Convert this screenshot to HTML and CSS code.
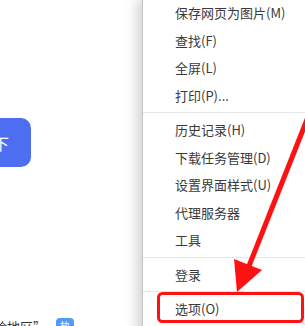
FILE: index.html
```html
<!DOCTYPE html>
<html lang="zh-CN">
<head>
    <meta charset="UTF-8">
    <title>菜单 - 选项</title>
    <link rel="stylesheet" href="styles.css">
</head>
<body>
    <!-- 后面的网页内容（被菜单挡住一部分） -->
    <div class="page">
        <div class="search-row">
            <button class="search-btn">百度一下</button>
        </div>
        <div class="hot-line">
            <span class="hot-text">风险地区”</span>
            <span class="hot-badge">热</span>
        </div>
    </div>

    <!-- 浏览器右上角展开的下拉菜单 -->
    <div class="menu">
        <div class="menu-item">保存网页为图片(M)</div>
        <div class="menu-item">查找(F)</div>
        <div class="menu-item">全屏(L)</div>
        <div class="menu-item">打印(P)...</div>
        <div class="menu-sep"></div>
        <div class="menu-item">历史记录(H)</div>
        <div class="menu-item">下载任务管理(D)</div>
        <div class="menu-item">设置界面样式(U)</div>
        <div class="menu-item">代理服务器</div>
        <div class="menu-item">工具</div>
        <div class="menu-sep"></div>
        <div class="menu-item">登录</div>
        <div class="menu-sep"></div>
        <div class="menu-item">选项(O)</div>
    </div>
    <div class="edge-tab"></div>

    <!-- 红色标注：箭头 + 框 -->
    <svg class="mark" width="305" height="326" viewBox="0 0 305 326">
        <line x1="310" y1="112" x2="249" y2="266" stroke="#ff1111" stroke-width="5"/>
        <polygon points="237,292 234,259 262,270" fill="#ff1111"/>
        <rect x="158.5" y="293.5" width="144" height="28" rx="4" fill="none" stroke="#ff1111" stroke-width="3"/>
    </svg>
</body>
</html>
```

FILE: styles.css
```css
body {
    margin: 0;
    width: 305px;
    height: 326px;
    position: relative;
    overflow: hidden;
    background-color: #fff;
    font-family: "Noto Sans CJK SC", "Microsoft YaHei", sans-serif;
}

/* 背后的网页 */
.page {
    padding-top: 118px;
}

.search-row {
    display: flex;
}

.search-btn {
    width: 100px;
    height: 49px;
    margin-left: -69px;
    padding: 0 22px 0 0;
    border: none;
    border-radius: 10px;
    background-color: #4e6ef2;
    color: #fff;
    font-family: inherit;
    font-size: 16px;
    text-align: right;
}

.hot-line {
    display: flex;
    align-items: center;
    margin-top: 151px;
    height: 16px;
}

.hot-text {
    margin-left: -19px;
    font-size: 13px;
    color: #333;
}

.hot-badge {
    margin-left: 10px;
    width: 18px;
    height: 16px;
    border-radius: 4px;
    background-color: #4e9cf6;
    color: #fff;
    font-size: 11px;
    line-height: 16px;
    text-align: center;
}

/* 下拉菜单 */
.menu {
    position: absolute;
    left: 142px;
    top: -1px;
    width: 170px;
    height: 340px;
    background-color: #fff;
    border-left: 1px solid #c4c4c4;
    box-shadow: -5px 0 12px rgba(0, 0, 0, 0.18);
}

.menu-item {
    height: 27.5px;
    line-height: 27.5px;
    padding-left: 32px;
    font-size: 13px;
    color: #3a3a3a;
    white-space: nowrap;
}

.menu-sep {
    height: 1px;
    margin: 3px 0;
    background-color: #e6e6e6;
}

/* 右下角的小灰块 */
.edge-tab {
    position: absolute;
    left: 301px;
    top: 308px;
    width: 8px;
    height: 15px;
    border: 1px solid #ddd;
    border-radius: 3px;
    background-color: #f6f6f6;
}

/* 红色标注 */
.mark {
    position: absolute;
    left: 0;
    top: 0;
    pointer-events: none;
}
```
